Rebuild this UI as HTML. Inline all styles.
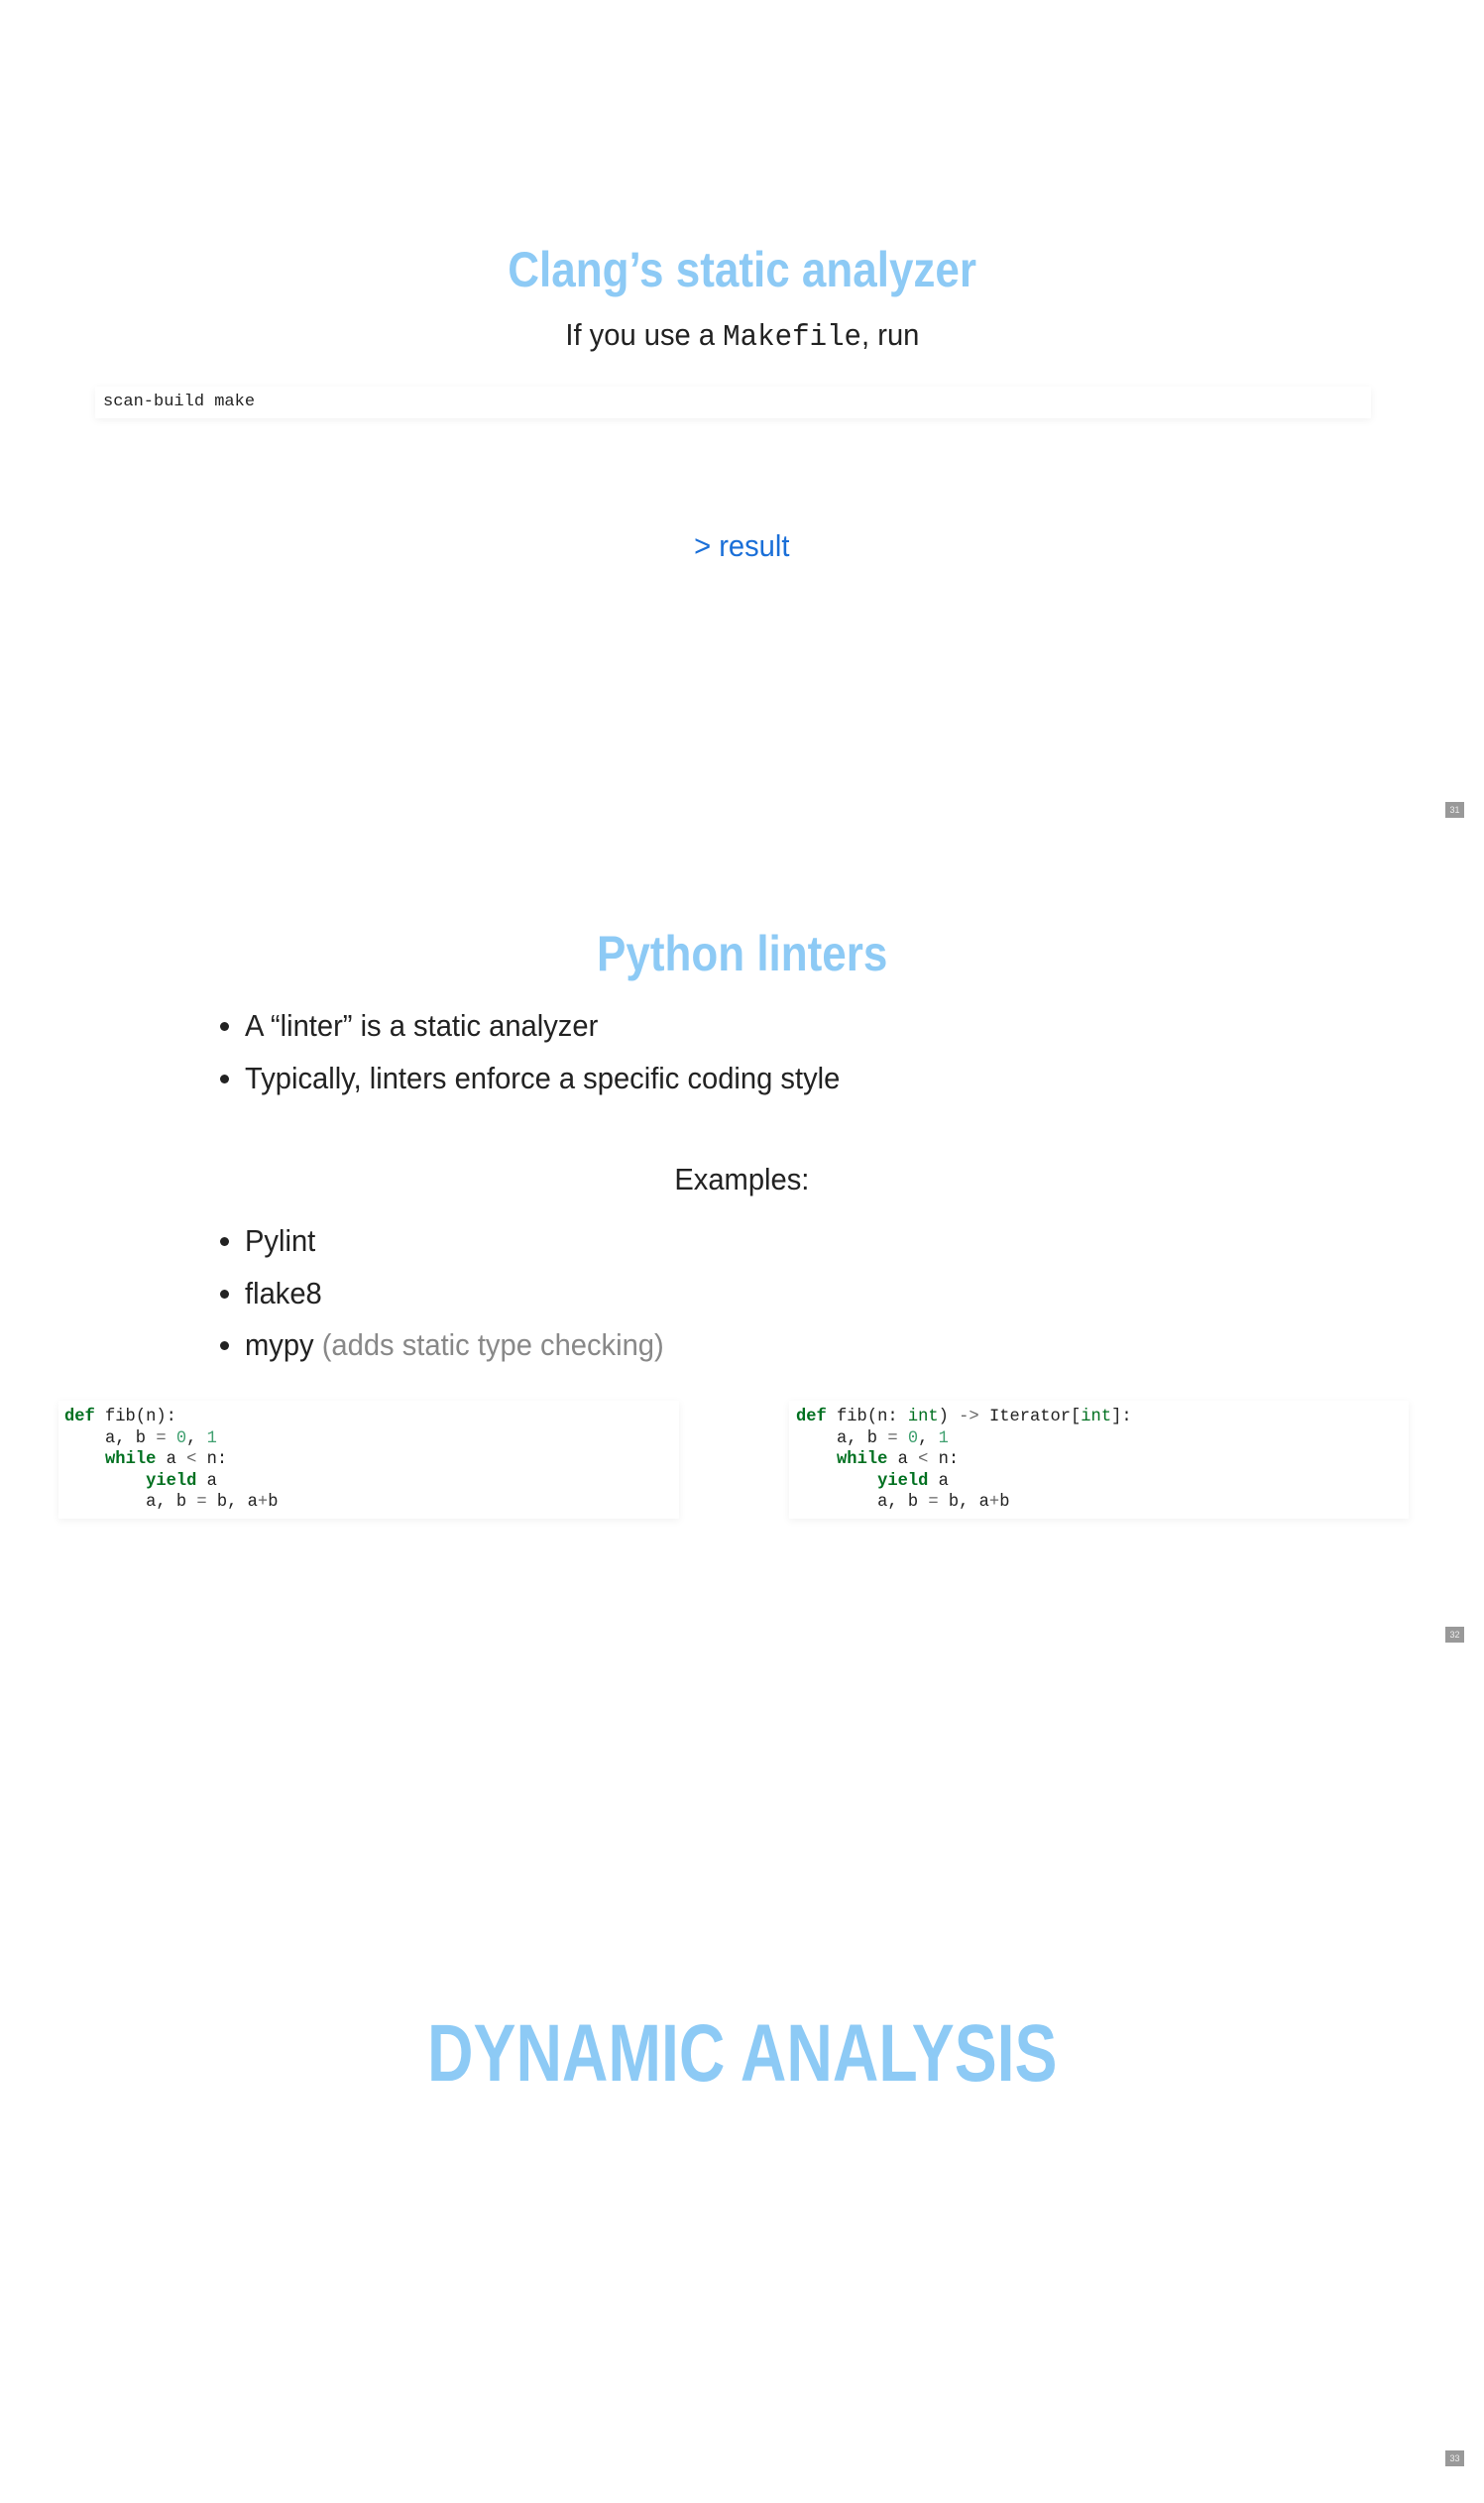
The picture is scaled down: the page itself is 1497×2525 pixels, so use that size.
<!DOCTYPE html>
<html><head><meta charset="utf-8"><style>
html,body{margin:0;padding:0;background:#fff;}
body{width:1497px;height:2525px;position:relative;overflow:hidden;font-family:"Liberation Sans",sans-serif;color:#222;}
.a{position:absolute;white-space:nowrap;}
.c{left:0;width:1497px;text-align:center;}
.s{display:inline-block;transform:scaleX(.94);}
.st{display:inline-block;transform:scaleX(.88);}
.sl{display:inline-block;transform:scaleX(.94);transform-origin:left center;}
.t{color:#8dcaf5;font-weight:bold;font-size:50px;line-height:60px;}
.b{font-size:31px;line-height:40px;}
.m{font-family:"Liberation Mono",monospace;}
.code{position:absolute;background:#fff;box-shadow:0 2px 8px rgba(0,0,0,.06);}
.code pre{margin:0;font-family:"Liberation Mono",monospace;font-size:17.1px;line-height:21.5px;color:#222;}
.k{color:#007020;font-weight:bold}.n{color:#40a070}.o{color:#666}.g{color:#007020}
.dot{position:absolute;width:9px;height:9px;border-radius:50%;background:#222;}
.pn{position:absolute;left:1458px;width:19px;height:16px;background:#999;color:#eee;font-size:9px;line-height:16px;text-align:center;}
</style></head><body>
<div class="a c t" style="top:242px"><span class="st">Clang’s static analyzer</span></div>
<div class="a c b" style="top:318px"><span class="s">If you use a <span class="m">Makefile</span>, run</span></div>
<div class="code" style="left:96px;top:390px;width:1287px;height:32px"><pre style="padding:6px 8px;font-size:17px;line-height:20px">scan-build make</pre></div>
<div class="a c b" style="top:531px;color:#1a6fd8"><span class="s">&gt; result</span></div>
<div class="pn" style="top:809px">31</div>

<div class="a c t" style="top:932px"><span class="st">Python linters</span></div>
<div class="dot" style="left:222px;top:1031px"></div>
<div class="a b" style="left:247px;top:1015px"><span class="sl">A “linter” is a static analyzer</span></div>
<div class="dot" style="left:222px;top:1084px"></div>
<div class="a b" style="left:247px;top:1068px"><span class="sl">Typically, linters enforce a specific coding style</span></div>
<div class="a c b" style="top:1170px"><span class="s">Examples:</span></div>
<div class="dot" style="left:222px;top:1248px"></div>
<div class="a b" style="left:247px;top:1232px"><span class="sl">Pylint</span></div>
<div class="dot" style="left:222px;top:1301px"></div>
<div class="a b" style="left:247px;top:1285px"><span class="sl">flake8</span></div>
<div class="dot" style="left:222px;top:1353px"></div>
<div class="a b" style="left:247px;top:1337px"><span class="sl">mypy <span style="color:#888">(adds static type checking)</span></span></div>

<div class="code" style="left:59px;top:1413px;width:626px;height:119px"><pre style="padding:6px 6px">
<span class="k">def</span> fib(n):
    a, b <span class="o">=</span> <span class="n">0</span>, <span class="n">1</span>
    <span class="k">while</span> a <span class="o">&lt;</span> n:
        <span class="k">yield</span> a
        a, b <span class="o">=</span> b, a<span class="o">+</span>b</pre></div>
<div class="code" style="left:796px;top:1413px;width:625px;height:119px"><pre style="padding:6px 7px">
<span class="k">def</span> fib(n: <span class="g">int</span>) <span class="o">-&gt;</span> Iterator[<span class="g">int</span>]:
    a, b <span class="o">=</span> <span class="n">0</span>, <span class="n">1</span>
    <span class="k">while</span> a <span class="o">&lt;</span> n:
        <span class="k">yield</span> a
        a, b <span class="o">=</span> b, a<span class="o">+</span>b</pre></div>
<div class="pn" style="top:1641px">32</div>

<div class="a c" style="top:2022px;color:#8dcaf5;font-weight:bold;font-size:82px;line-height:100px"><span style="display:inline-block;transform:scaleX(.785)">DYNAMIC ANALYSIS</span></div>
<div class="pn" style="top:2472px">33</div>
</body></html>
